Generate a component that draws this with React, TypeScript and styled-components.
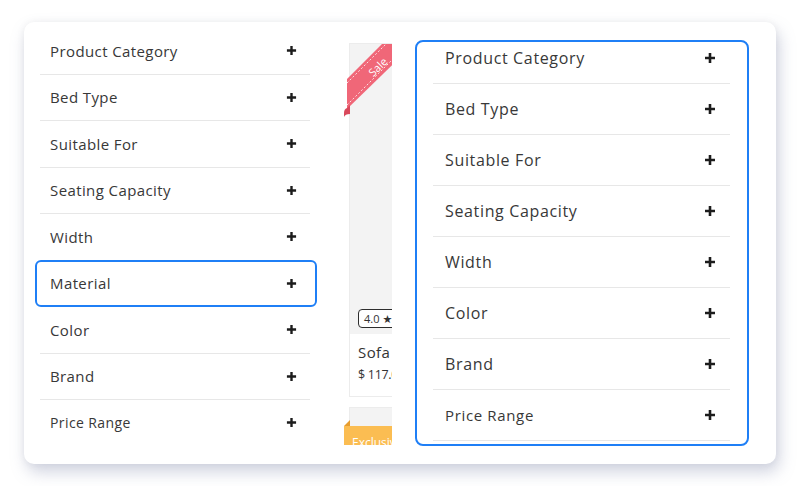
import React from "react";
import styled, { createGlobalStyle } from "styled-components";

const Global = createGlobalStyle`
  html, body { margin: 0; padding: 0; background: #ffffff; }
  body { font-family: "Open Sans", "DejaVu Sans", sans-serif; color: #333; }
  * { box-sizing: border-box; }
`;

const BLUE = "#1f7ff6";

const Card = styled.div`
  margin: 22px 24px;
  width: 752px;
  height: 442px;
  background: #fff;
  border-radius: 10px;
  box-shadow: 3px 8px 16px rgba(120, 130, 165, 0.35), 0 0 8px rgba(0, 0, 0, 0.05);
  display: flex;
  align-items: flex-start;
  padding: 0 27px 0 16px;
`;

const LeftList = styled.div`
  width: 270px;
  margin-top: 6px;
  display: flex;
  flex-direction: column;
`;

const Row = styled.div<{ $h: number; $active?: boolean; $last?: boolean; $padL: number; $padR: number }>`
  height: ${(p) => p.$h}px;
  display: flex;
  align-items: center;
  justify-content: space-between;
  padding: 0 ${(p) => p.$padR}px 0 ${(p) => p.$padL}px;
  border-bottom: ${(p) => (p.$last ? "none" : "1px solid #e7e7e7")};
  ${(p) =>
    p.$active &&
    `
    margin: -1px -7px 0 -5px;
    height: ${p.$h + 1}px;
    padding: 0 ${p.$padR + 5}px 0 ${p.$padL + 3}px;
    border: 2px solid ${BLUE};
    border-radius: 6px;
  `}
`;

const Label = styled.span<{ $size: number; $ls: number }>`
  font-size: ${(p) => p.$size}px;
  letter-spacing: ${(p) => p.$ls}px;
  color: #383838;
  white-space: nowrap;
`;

const PlusIcon = ({ size = 11 }: { size?: number }) => (
  <svg width={size} height={size} viewBox="0 0 12 12">
    <path d="M6 1v10M1 6h10" stroke="#1c1c1c" strokeWidth="2.6" strokeLinecap="butt" />
  </svg>
);

const ProductColumn = styled.div`
  width: 49px;
  height: 402px;
  margin: 21px 23px 0 33px;
  overflow: hidden;
  display: flex;
  flex-direction: column;
  gap: 10px;
  flex-shrink: 0;
`;

const ProductCard = styled.div<{ $h: number }>`
  position: relative;
  margin-left: 6px;
  width: 200px;
  height: ${(p) => p.$h}px;
  flex-shrink: 0;
  border: 1px solid #ececec;
  background: #fff;
  display: flex;
  flex-direction: column;
`;

const ImageArea = styled.div<{ $h: number }>`
  position: relative;
  height: ${(p) => p.$h}px;
  background: #f3f3f3;
  flex-shrink: 0;
`;

const Rating = styled.div`
  position: absolute;
  left: 8px;
  bottom: 6px;
  height: 19px;
  padding: 0 5px;
  border: 1px solid #2d2d2d;
  border-radius: 4px;
  background: #fff;
  display: flex;
  align-items: center;
  gap: 3px;
  font-size: 11px;
  color: #333;
`;

const Info = styled.div`
  padding: 8px 8px;
  display: flex;
  flex-direction: column;
  gap: 4px;
`;

const Name = styled.div`
  font-size: 15px;
  letter-spacing: 0.4px;
  color: #333;
`;

const Price = styled.div`
  font-size: 12.5px;
  letter-spacing: -0.3px;
  color: #333;
  white-space: nowrap;
`;

const Ribbon = styled.svg`
  position: absolute;
  left: -6px;
  top: 0;
  overflow: visible;
`;

const Exclusive = styled.div`
  position: absolute;
  left: -6px;
  top: 18px;
  width: 120px;
  height: 24px;
  background: #fbbd52;
  color: #fff;
  font-size: 12px;
  padding: 8px 0 0 8px;
  &::before {
    content: "";
    position: absolute;
    left: 0;
    top: -6px;
    border-left: 6px solid transparent;
    border-bottom: 6px solid #e79d2e;
  }
`;

const Panel = styled.div`
  width: 334px;
  height: 406px;
  margin-top: 18px;
  border: 2px solid ${BLUE};
  border-radius: 8px;
  padding: 0 17px 0 16px;
  overflow: hidden;
  flex-shrink: 0;
`;

const PanelList = styled.div`
  margin-top: -9px;
  display: flex;
  flex-direction: column;
`;

const filters = [
  "Product Category",
  "Bed Type",
  "Suitable For",
  "Seating Capacity",
  "Width",
  "Material",
  "Color",
  "Brand",
  "Price Range",
];

const panelFilters = [
  "Product Category",
  "Bed Type",
  "Suitable For",
  "Seating Capacity",
  "Width",
  "Color",
  "Brand",
  "Price Range",
];

export default function App() {
  return (
    <>
      <Global />
      <Card>
        <LeftList>
          {filters.map((f, i) => (
            <Row
              key={f}
              $h={i === 8 ? 45 : 46.5}
              $padL={10}
              $padR={13}
              $active={f === "Material"}
              $last={i === 8}
            >
              <Label $size={f === "Price Range" ? 14 : 15} $ls={0.4}>
                {f}
              </Label>
              <PlusIcon />
            </Row>
          ))}
        </LeftList>

        <ProductColumn>
          <ProductCard $h={354}>
            <ImageArea $h={290}>
              <Ribbon width="70" height="80" viewBox="0 0 70 80">
                <polygon points="3,35 38,0 70,0 3,65" fill="#f06778" />
                <path d="M3,64 Q0,65 0,69 L0,73 Q1,70 6,70 L6,61 Z" fill="#d9485b" />
                <line x1="3" y1="39" x2="42" y2="0" stroke="#fff" strokeWidth="0.8" strokeDasharray="2 2" />
                <line x1="3" y1="61" x2="64" y2="0" stroke="#fff" strokeWidth="0.8" strokeDasharray="2 2" />
                <text
                  x="34"
                  y="27"
                  fill="#fff"
                  fontSize="11"
                  fontFamily="Open Sans, sans-serif"
                  transform="rotate(-45 34 23)"
                  textAnchor="middle"
                >
                  Sale
                </text>
              </Ribbon>
              <Rating>
                4.0 <span>★</span>
              </Rating>
            </ImageArea>
            <Info>
              <Name>Sofa</Name>
              <Price>$ 117.00</Price>
            </Info>
          </ProductCard>
          <ProductCard $h={200}>
            <ImageArea $h={180}>
              <Exclusive>Exclusive</Exclusive>
            </ImageArea>
          </ProductCard>
        </ProductColumn>

        <Panel>
          <PanelList>
            {panelFilters.map((f) => (
              <Row key={f} $h={51} $padL={12} $padR={14}>
                <Label $size={f === "Price Range" ? 15 : 16} $ls={0.65}>
                  {f}
                </Label>
                <PlusIcon size={12} />
              </Row>
            ))}
          </PanelList>
        </Panel>
      </Card>
    </>
  );
}
